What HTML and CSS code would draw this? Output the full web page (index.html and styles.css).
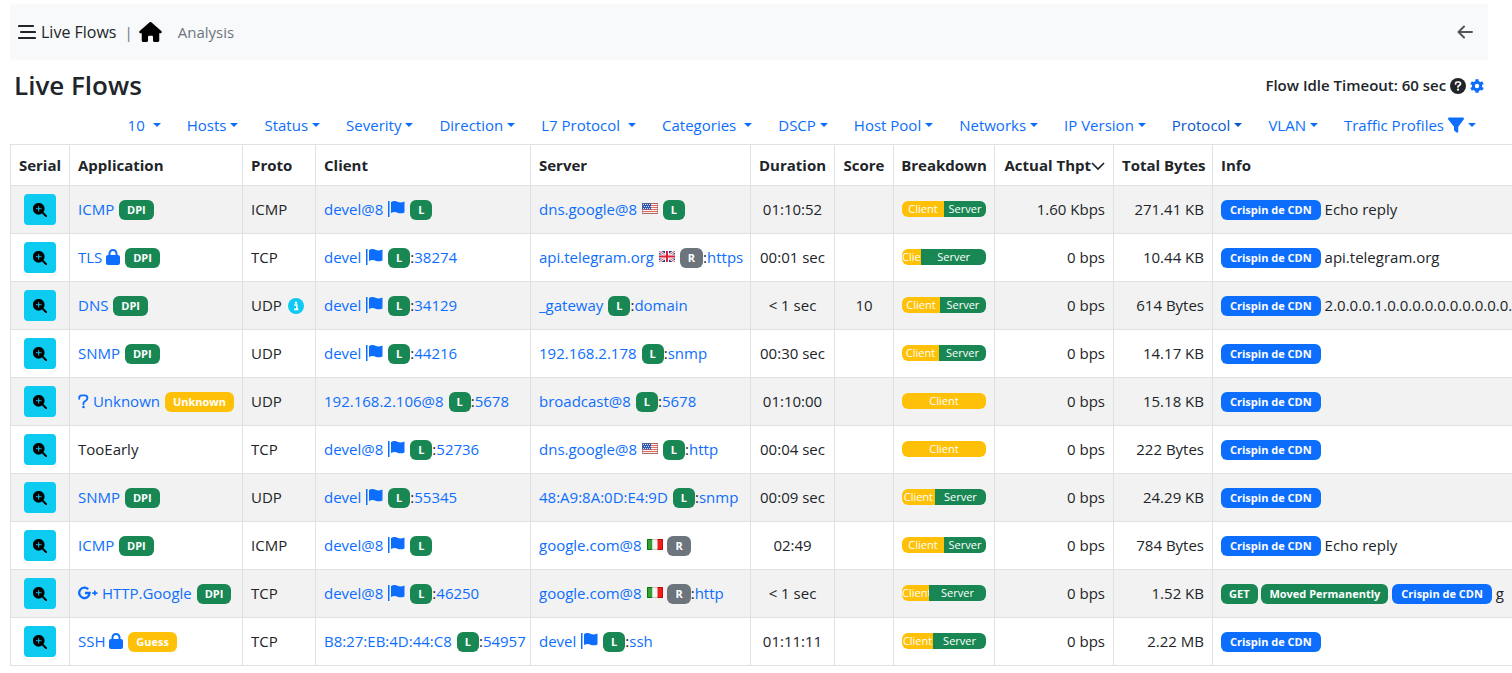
FILE: index.html
```html
<!DOCTYPE html>
<html lang="en">
<head>
<meta charset="utf-8">
<title>Live Flows</title>
<link rel="stylesheet" href="styles.css">
</head>
<body>
<svg class="sprite" aria-hidden="true">
  <symbol id="zoom" viewBox="0 0 512 512"><path fill-rule="evenodd" d="M416 208c0 45.900-14.900 88.300-40 122.700L502.600 457.400c12.500 12.500 12.500 32.800 0 45.300s-32.800 12.500-45.300 0L330.700 376c-34.400 25.200-76.800 40-122.700 40C93.100 416 0 322.900 0 208S93.100 0 208 0S416 93.100 416 208zM184 296c0 13.300 10.700 24 24 24s24-10.700 24-24l0-64 64 0c13.300 0 24-10.700 24-24s-10.700-24-24-24l-64 0 0-64c0-13.300-10.700-24-24-24s-24 10.700-24 24l0 64-64 0c-13.300 0-24 10.700-24 24s10.700 24 24 24l64 0 0 64z" stroke="currentColor" stroke-width="14"/></symbol>
  <symbol id="home" viewBox="0 0 576 512"><path d="M575.800 255.500c0 18-15 32.100-32 32.100l-32 0 .7 160.200c0 2.700-.2 5.400-.5 8.100l0 16.200c0 22.100-17.900 40-40 40l-80 0c-22.100 0-40-17.900-40-40l0-88c0-17.700-14.300-32-32-32l-64 0c-17.700 0-32 14.300-32 32l0 88c0 22.100-17.900 40-40 40l-80 0c-22.100 0-40-17.900-40-40l0-184.500-32 0c-18 0-32-14-32-32.100c0-9 3-17 10-24L266.400 8c7-7 15-8 22-8s15 2 21 7L564.800 231.500c8 7 12 15 11 24z"/></symbol>
  <symbol id="lock" viewBox="0 0 448 512"><path d="M144 144v48H304V144c0-44.200-35.800-80-80-80s-80 35.800-80 80zM80 192V144C80 64.500 144.500 0 224 0s144 64.500 144 144v48h16c35.300 0 64 28.700 64 64V448c0 35.300-28.700 64-64 64H64c-35.300 0-64-28.700-64-64V256c0-35.300 28.700-64 64-64H80z"/></symbol>
  <symbol id="flag" viewBox="0 0 17 16"><path d="M0 0h1.500v16H0zM3 1.200C6-.6 8 .2 10 1c2 .7 4 .4 6.500-.6v11c-2.500 1-4.500 1.200-6.500.5-2-.8-4-1.400-7 .1z"/></symbol>
  <symbol id="filter" viewBox="0 0 512 512"><path d="M4 40C10 26 24 18 40 18H472c16 0 30 8 36 22s5 31-5 43L328 310V470c0 12-7 23-18 29s-24 4-34-3l-72-54c-8-6-12-16-12-26V310L9 83C-1 71-3 54 4 40z"/></symbol>
  <symbol id="question" viewBox="0 0 12 16"><path d="M1.300 5V4.200C1.300 2.600 2.500 1.300 4.200 1.300h3c1.800 0 3.100 1.300 3.100 3 0 1.400-.8 2.200-1.900 2.900L6.800 8.200C6.200 8.600 6 9 6 9.600V11" fill="none" stroke="currentColor" stroke-width="2" stroke-linecap="round"/><circle cx="6" cy="14" r="1.400"/></symbol>
  <symbol id="gplus" viewBox="0 0 20 14"><path d="M10.200 3.300A5.200 5.200 0 1 0 11.600 7H7" fill="none" stroke="currentColor" stroke-width="2.300"/><path d="M16 4.500h1.700v1.700h1.800v1.700h-1.800v1.700H16V7.900h-1.800V6.200H16z"/></symbol>
  <symbol id="help" viewBox="0 0 16 16"><circle cx="8" cy="8" r="8"/><path d="M5.600 6V5.500C5.600 4.600 6.300 4 7.200 4h1.500c1 0 1.800.7 1.800 1.700 0 .8-.4 1.200-1 1.600L8.400 8c-.3.200-.4.400-.4.900" fill="none" stroke="#fff" stroke-width="1.700" stroke-linecap="round"/><circle cx="8" cy="11.700" r="1.100" fill="#fff"/></symbol>
  <symbol id="info" viewBox="0 0 16 16"><circle cx="8" cy="8" r="8"/><circle cx="8" cy="4.700" r="1.200" fill="#fff"/><path d="M6.300 7h2.500v4M6 11.400h4.400" fill="none" stroke="#fff" stroke-width="1.600"/></symbol>
  <symbol id="gear" viewBox="0 0 16 16"><g fill="none" stroke="currentColor"><circle cx="8" cy="8" r="4.200" stroke-width="3.400"/><path d="M8 .2v3.300M8 12.500v3.300M1.250 4.100l2.850 1.650M11.900 10.250l2.850 1.650M1.250 11.900l2.850-1.650M11.900 5.750l2.850-1.650" stroke-width="3.800"/></g></symbol>
  <symbol id="back" viewBox="0 0 16 14"><path d="M7 1.500L1.500 7 7 12.500M2 7h13" fill="none" stroke="currentColor" stroke-width="2" stroke-linecap="round" stroke-linejoin="round"/></symbol>
  <symbol id="sort" viewBox="0 0 14 10"><path d="M1 2l6 6 6-6" fill="none" stroke="currentColor" stroke-width="1.700"/></symbol>
  <symbol id="menu" viewBox="0 0 18 16"><path d="M1 2h14M3 8h14M1 14h16" fill="none" stroke="currentColor" stroke-width="2.200" stroke-linecap="round"/></symbol>
  <symbol id="us" viewBox="0 0 16 11"><path fill="#f8f3f2" d="M0 0h16v11H0z"/><path d="M0 .5h16M0 2.500h16M0 4.500h16M0 6.500h16M0 8.500h16M0 10.500h16" stroke="#e4685c"/><path fill="#2858b8" d="M0 0h9v6.500H0z"/><path d="M1 1.500h7.500M2 3.500h6.500M1 5.500h7.500" stroke="#d5e1f6" stroke-dasharray="1"/><path d="M.5.500h15v10H.5z" fill="none" stroke="#75696f" stroke-opacity=".5"/></symbol>
  <symbol id="gb" viewBox="0 0 16 11"><path fill="#24408e" d="M0 0h16v11H0z"/><path d="M0 0l16 11M16 0L0 11" stroke="#fff" stroke-width="2.600"/><path d="M0 0l16 11M16 0L0 11" stroke="#df5361"/><path d="M8 0v11M0 5.500h16" stroke="#fff" stroke-width="4"/><path d="M8 0v11M0 5.500h16" stroke="#dc2339" stroke-width="2"/></symbol>
  <symbol id="it" viewBox="0 0 16 11"><path fill="#35a035" d="M0 0h5.500v11H0z"/><path fill="#f5f5f5" d="M5.500 0h5v11h-5z"/><path fill="#f01c1c" d="M10.500 0H16v11h-5.500z"/><path d="M5.500.500H.5v10h5" fill="none" stroke="#087a0b"/><path d="M5.500.500h5M5.500 10.500h5" stroke="#c9c9c9"/><path d="M10.500.500h5v10h-5" fill="none" stroke="#c40a0a"/></symbol>
</svg>

<nav class="topbar">
  <button class="menu" type="button" aria-label="Menu"><svg class="i-menu"><use href="#menu"/></svg></button>
  <span class="brand">Live Flows</span>
  <span class="divider">|</span>
  <a class="home" href="#" aria-label="Home"><svg class="i-home"><use href="#home"/></svg></a>
  <a class="crumb" href="#">Analysis</a>
  <a class="back" href="#" aria-label="Back"><svg class="i-back"><use href="#back"/></svg></a>
</nav>

<header class="heading">
  <h1>Live Flows</h1>
  <div class="timeout">Flow Idle Timeout: 60 sec <svg class="i16"><use href="#help"/></svg> <a href="#" aria-label="Settings"><svg class="i-gear"><use href="#gear"/></svg></a></div>
</header>

<div class="filters">
  <button class="filter spaced" type="button">10</button>
  <button class="filter" type="button">Hosts</button>
  <button class="filter" type="button">Status</button>
  <button class="filter" type="button">Severity</button>
  <button class="filter" type="button">Direction</button>
  <button class="filter spaced" type="button">L7 Protocol</button>
  <button class="filter spaced" type="button">Categories</button>
  <button class="filter" type="button">DSCP</button>
  <button class="filter" type="button">Host Pool</button>
  <button class="filter" type="button">Networks</button>
  <button class="filter" type="button">IP Version</button>
  <button class="filter active" type="button">Protocol</button>
  <button class="filter" type="button">VLAN</button>
  <button class="filter" type="button">Traffic Profiles <svg class="i16"><use href="#filter"/></svg></button>
</div>

<main class="flows">
<table>
  <colgroup><col class="c-serial"><col class="c-app"><col class="c-proto"><col class="c-client"><col class="c-server"><col class="c-duration"><col class="c-score"><col class="c-breakdown"><col class="c-thpt"><col class="c-bytes"><col></colgroup>
  <thead>
    <tr><th class="mid">Serial</th><th>Application</th><th>Proto</th><th>Client</th><th>Server</th><th class="mid">Duration</th><th class="mid">Score</th><th class="mid">Breakdown</th><th class="num">Actual Thpt<svg class="i-sort"><use href="#sort"/></svg></th><th class="num">Total Bytes</th><th>Info</th></tr>
  </thead>
  <tbody>
    <tr>
      <td class="action"><button class="detail" type="button" aria-label="Flow details"><svg><use href="#zoom"/></svg></button></td>
      <td><a href="#">ICMP</a> <span class="badge ok">DPI</span></td>
      <td>ICMP</td>
      <td><a href="#">devel@8 <svg class="i-flag"><use href="#flag"/></svg></a> <span class="badge ok">L</span></td>
      <td><a href="#">dns.google@8</a> <svg class="country"><use href="#us"/></svg> <span class="badge ok">L</span></td>
      <td class="mid">01:10:52</td><td></td>
      <td><div class="bar"><span class="cli" style="width:50%">Client</span><span class="srv">Server</span></div></td>
      <td class="num">1.60 Kbps</td><td class="num">271.41 KB</td>
      <td><span class="badge host">Crispin de CDN</span> Echo reply</td>
    </tr>
    <tr>
      <td class="action"><button class="detail" type="button" aria-label="Flow details"><svg><use href="#zoom"/></svg></button></td>
      <td><a href="#">TLS <svg class="i-lock"><use href="#lock"/></svg></a> <span class="badge ok">DPI</span></td>
      <td>TCP</td>
      <td><a href="#">devel <svg class="i-flag"><use href="#flag"/></svg></a> <span class="badge ok">L</span>:<a href="#">38274</a></td>
      <td><a href="#">api.telegram.org</a> <svg class="country"><use href="#gb"/></svg> <span class="badge remote">R</span>:<a href="#">https</a></td>
      <td class="mid">00:01 sec</td><td></td>
      <td><div class="bar"><span class="cli" style="width:23%">Client</span><span class="srv">Server</span></div></td>
      <td class="num">0 bps</td><td class="num">10.44 KB</td>
      <td><span class="badge host">Crispin de CDN</span> api.telegram.org</td>
    </tr>
    <tr>
      <td class="action"><button class="detail" type="button" aria-label="Flow details"><svg><use href="#zoom"/></svg></button></td>
      <td><a href="#">DNS</a> <span class="badge ok">DPI</span></td>
      <td>UDP <svg class="i16 i-info"><use href="#info"/></svg></td>
      <td><a href="#">devel <svg class="i-flag"><use href="#flag"/></svg></a> <span class="badge ok">L</span>:<a href="#">34129</a></td>
      <td><a href="#">_gateway</a> <span class="badge ok">L</span>:<a href="#">domain</a></td>
      <td class="mid">&lt; 1 sec</td><td class="mid">10</td>
      <td><div class="bar"><span class="cli" style="width:45%">Client</span><span class="srv">Server</span></div></td>
      <td class="num">0 bps</td><td class="num">614 Bytes</td>
      <td><span class="badge host">Crispin de CDN</span> 2.0.0.0.1.0.0.0.0.0.0.0.0.0.0.0.0</td>
    </tr>
    <tr>
      <td class="action"><button class="detail" type="button" aria-label="Flow details"><svg><use href="#zoom"/></svg></button></td>
      <td><a href="#">SNMP</a> <span class="badge ok">DPI</span></td>
      <td>UDP</td>
      <td><a href="#">devel <svg class="i-flag"><use href="#flag"/></svg></a> <span class="badge ok">L</span>:<a href="#">44216</a></td>
      <td><a href="#">192.168.2.178</a> <span class="badge ok">L</span>:<a href="#">snmp</a></td>
      <td class="mid">00:30 sec</td><td></td>
      <td><div class="bar"><span class="cli" style="width:44%">Client</span><span class="srv">Server</span></div></td>
      <td class="num">0 bps</td><td class="num">14.17 KB</td>
      <td><span class="badge host">Crispin de CDN</span></td>
    </tr>
    <tr>
      <td class="action"><button class="detail" type="button" aria-label="Flow details"><svg><use href="#zoom"/></svg></button></td>
      <td><a href="#"><svg class="i-question"><use href="#question"/></svg> Unknown</a> <span class="badge warn">Unknown</span></td>
      <td>UDP</td>
      <td><a href="#">192.168.2.106@8</a> <span class="badge ok">L</span>:<a href="#">5678</a></td>
      <td><a href="#">broadcast@8</a> <span class="badge ok">L</span>:<a href="#">5678</a></td>
      <td class="mid">01:10:00</td><td></td>
      <td><div class="bar"><span class="cli" style="width:100%">Client</span></div></td>
      <td class="num">0 bps</td><td class="num">15.18 KB</td>
      <td><span class="badge host">Crispin de CDN</span></td>
    </tr>
    <tr>
      <td class="action"><button class="detail" type="button" aria-label="Flow details"><svg><use href="#zoom"/></svg></button></td>
      <td>TooEarly</td>
      <td>TCP</td>
      <td><a href="#">devel@8 <svg class="i-flag"><use href="#flag"/></svg></a> <span class="badge ok">L</span>:<a href="#">52736</a></td>
      <td><a href="#">dns.google@8</a> <svg class="country"><use href="#us"/></svg> <span class="badge ok">L</span>:<a href="#">http</a></td>
      <td class="mid">00:04 sec</td><td></td>
      <td><div class="bar"><span class="cli" style="width:100%">Client</span></div></td>
      <td class="num">0 bps</td><td class="num">222 Bytes</td>
      <td><span class="badge host">Crispin de CDN</span></td>
    </tr>
    <tr>
      <td class="action"><button class="detail" type="button" aria-label="Flow details"><svg><use href="#zoom"/></svg></button></td>
      <td><a href="#">SNMP</a> <span class="badge ok">DPI</span></td>
      <td>UDP</td>
      <td><a href="#">devel <svg class="i-flag"><use href="#flag"/></svg></a> <span class="badge ok">L</span>:<a href="#">55345</a></td>
      <td><a href="#">48:A9:8A:0D:E4:9D</a> <span class="badge ok">L</span>:<a href="#">snmp</a></td>
      <td class="mid">00:09 sec</td><td></td>
      <td><div class="bar"><span class="cli" style="width:39%">Client</span><span class="srv">Server</span></div></td>
      <td class="num">0 bps</td><td class="num">24.29 KB</td>
      <td><span class="badge host">Crispin de CDN</span></td>
    </tr>
    <tr>
      <td class="action"><button class="detail" type="button" aria-label="Flow details"><svg><use href="#zoom"/></svg></button></td>
      <td><a href="#">ICMP</a> <span class="badge ok">DPI</span></td>
      <td>ICMP</td>
      <td><a href="#">devel@8 <svg class="i-flag"><use href="#flag"/></svg></a> <span class="badge ok">L</span></td>
      <td><a href="#">google.com@8</a> <svg class="country"><use href="#it"/></svg> <span class="badge remote">R</span></td>
      <td class="mid">02:49</td><td></td>
      <td><div class="bar"><span class="cli" style="width:50%">Client</span><span class="srv">Server</span></div></td>
      <td class="num">0 bps</td><td class="num">784 Bytes</td>
      <td><span class="badge host">Crispin de CDN</span> Echo reply</td>
    </tr>
    <tr>
      <td class="action"><button class="detail" type="button" aria-label="Flow details"><svg><use href="#zoom"/></svg></button></td>
      <td><a href="#"><svg class="i-gplus"><use href="#gplus"/></svg> HTTP.Google</a> <span class="badge ok">DPI</span></td>
      <td>TCP</td>
      <td><a href="#">devel@8 <svg class="i-flag"><use href="#flag"/></svg></a> <span class="badge ok">L</span>:<a href="#">46250</a></td>
      <td><a href="#">google.com@8</a> <svg class="country"><use href="#it"/></svg> <span class="badge remote">R</span>:<a href="#">http</a></td>
      <td class="mid">&lt; 1 sec</td><td></td>
      <td><div class="bar"><span class="cli" style="width:32%">Client</span><span class="srv">Server</span></div></td>
      <td class="num">0 bps</td><td class="num">1.52 KB</td>
      <td><span class="badge ok first">GET</span> <span class="badge ok">Moved Permanently</span> <span class="badge host">Crispin de CDN</span> g</td>
    </tr>
    <tr>
      <td class="action"><button class="detail" type="button" aria-label="Flow details"><svg><use href="#zoom"/></svg></button></td>
      <td><a href="#">SSH <svg class="i-lock"><use href="#lock"/></svg></a> <span class="badge warn">Guess</span></td>
      <td>TCP</td>
      <td><a href="#">B8:27:EB:4D:44:C8</a> <span class="badge ok">L</span>:<a href="#">54957</a></td>
      <td><a href="#">devel <svg class="i-flag"><use href="#flag"/></svg></a> <span class="badge ok">L</span>:<a href="#">ssh</a></td>
      <td class="mid">01:11:11</td><td></td>
      <td><div class="bar"><span class="cli" style="width:37%">Client</span><span class="srv">Server</span></div></td>
      <td class="num">0 bps</td><td class="num">2.22 MB</td>
      <td><span class="badge host">Crispin de CDN</span></td>
    </tr>
  </tbody>
</table>
</main>
</body>
</html>
```
FILE: styles.css
```css
* { box-sizing: border-box; }
body {
  margin: 0;
  padding: 4px 0 0 10px;
  overflow-x: hidden;
  background: #fff;
  color: #212529;
  font: 15px/24px "Open Sans", "Noto Sans", sans-serif;
}
a { color: #0d6efd; text-decoration: none; }
button { font: inherit; color: inherit; border: 0; background: none; padding: 0; cursor: pointer; }
svg { fill: currentColor; }
.sprite { display: none; }

.topbar {
  display: flex;
  align-items: center;
  height: 56px;
  margin-right: 24px;
  padding: 0 15px 0 8px;
  background: #f8f9fa;
  border-radius: 4px;
}
.topbar svg { display: block; }
.i-menu { width: 18px; height: 16px; }
.brand { margin-left: 5px; font-size: 16px; }
.divider { margin: 0 6px 0 8px; color: #6c757d; }
.home { color: #000; }
.i-home { width: 23px; height: 20px; }
.crumb { margin-left: 16px; color: #6c757d; }
.back { margin-left: auto; color: #555; }
.i-back { width: 16px; height: 14px; }

.heading {
  display: flex;
  justify-content: space-between;
  align-items: center;
  height: 52px;
  margin-right: 28px;
  padding: 0 0 2px 4px;
}
h1 { margin: 0; font-size: 26px; font-weight: 600; line-height: 32px; }
.timeout { font-weight: 600; }
.i16 { width: 16px; height: 16px; vertical-align: -3px; }
.i-gear { width: 14px; height: 14px; vertical-align: -2px; }
.i-info { margin-left: 2px; color: #0dcaf0; }

.filters {
  display: flex;
  justify-content: flex-end;
  gap: 26px;
  height: 32px;
  padding: 1px 36px 7px 0;
}
.filter { display: flex; align-items: center; gap: 4px; color: #0d6efd; white-space: nowrap; }
.filter.spaced { gap: 8px; }
.filter.active { color: #0a58ca; }
.filter::after {
  content: "";
  border: 4px solid transparent;
  border-top-color: currentColor;
  border-bottom: 0;
}

.flows { overflow: hidden; margin-right: -8px; }
table { width: 100%; table-layout: fixed; border-collapse: collapse; }
.c-serial { width: 59px; }
.c-app { width: 173px; }
.c-proto { width: 73px; }
.c-client { width: 215px; }
.c-server { width: 220px; }
.c-duration { width: 84px; }
.c-score { width: 59px; }
.c-breakdown { width: 101px; }
.c-thpt { width: 119px; }
.c-bytes { width: 99px; }
th, td {
  border: 1px solid #dee2e6;
  text-align: left;
  vertical-align: middle;
  white-space: nowrap;
}
th { height: 41px; padding: 0 8px; font-weight: 700; }
td { height: 48px; padding: 0 8px 2px; }
.mid, .action { text-align: center; padding-left: 0; padding-right: 0; }
.action { padding-bottom: 0; }
.num { text-align: right; }
tbody tr:nth-child(odd) { background: #f2f2f2; }

.detail {
  display: inline-flex;
  align-items: center;
  justify-content: center;
  width: 32px;
  height: 31px;
  border-radius: 4px;
  background: #0dcaf0;
  color: #000;
  vertical-align: middle;
}
.detail svg { width: 14px; height: 14px; }
.badge {
  display: inline-block;
  padding: 4px 8px;
  border-radius: 6px;
  color: #fff;
  font-size: 11px;
  font-weight: 700;
  line-height: 12px;
  vertical-align: middle;
}
.ok { background: #198754; }
.warn { background: #ffc107; }
.remote { background: #6c757d; }
.host { padding: 4px 9px; background: #0d6efd; }
td > a + .badge { margin-left: 1px; }
.i-flag { width: 17px; height: 16px; margin-left: 1px; vertical-align: -2px; }
.i-lock { width: 14px; height: 16px; vertical-align: -2px; }
.i-question { width: 11px; height: 15px; vertical-align: -2px; }
.i-gplus { width: 20px; height: 14px; vertical-align: -1px; }
.i-sort { width: 14px; height: 10px; }
.country { width: 16px; height: 11px; margin: 0 1px; vertical-align: 1px; }

.bar {
  display: flex;
  height: 16px;
  overflow: hidden;
  border-radius: 6px;
  color: #fff;
  font-size: 11px;
  line-height: 16px;
  text-align: center;
}
.cli { flex: none; overflow: hidden; background: #ffc107; }
.srv { flex: 1; background: #198754; }
```
